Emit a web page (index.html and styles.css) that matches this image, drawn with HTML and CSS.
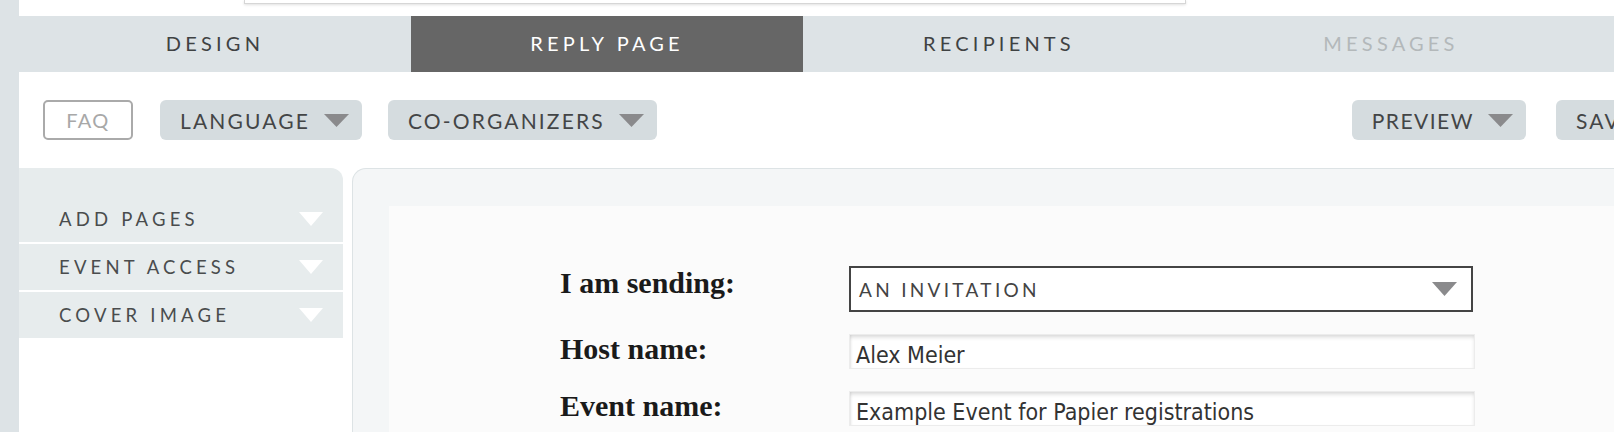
FILE: index.html
```html
<!DOCTYPE html>
<html lang="en">
<head>
<meta charset="utf-8">
<title>Reply Page</title>
<link rel="stylesheet" href="styles.css">
</head>
<body>
<div class="page">
  <div class="strip"></div>
  <div class="main">
    <div class="topbar"><div class="topfield"></div></div>
    <nav class="tabs">
      <div class="tab">DESIGN</div>
      <div class="tab active">REPLY PAGE</div>
      <div class="tab">RECIPIENTS</div>
      <div class="tab disabled">MESSAGES</div>
    </nav>
    <div class="toolbar">
      <div class="tool-group">
        <span class="faq">FAQ</span>
        <span class="btn">LANGUAGE<svg class="caret" viewBox="0 0 25 13"><polygon points="0,0 25,0 12.5,13"/></svg></span>
        <span class="btn">CO-ORGANIZERS<svg class="caret" viewBox="0 0 25 13"><polygon points="0,0 25,0 12.5,13"/></svg></span>
      </div>
      <div class="tool-group tool-right">
        <span class="btn btn-preview">PREVIEW<svg class="caret" viewBox="0 0 25 13"><polygon points="0,0 25,0 12.5,13"/></svg></span>
        <span class="btn btn-save">SAVE</span>
      </div>
    </div>
    <div class="workspace">
      <aside class="sidebar">
        <div class="side-item">ADD PAGES<svg class="side-caret" viewBox="0 0 24 14"><polygon points="0,0 24,0 12,14"/></svg></div>
        <div class="side-item">EVENT ACCESS<svg class="side-caret" viewBox="0 0 24 14"><polygon points="0,0 24,0 12,14"/></svg></div>
        <div class="side-item">COVER IMAGE<svg class="side-caret" viewBox="0 0 24 14"><polygon points="0,0 24,0 12,14"/></svg></div>
      </aside>
      <section class="panel">
        <div class="inner">
          <div class="form">
            <label class="label">I am sending:</label>
            <div class="select"><span>AN INVITATION</span><svg class="caret" viewBox="0 0 25 14"><polygon points="0,0 25,0 12.5,14"/></svg></div>
            <label class="label">Host name:</label>
            <div class="input">Alex Meier</div>
            <label class="label">Event name:</label>
            <div class="input">Example Event for Papier registrations</div>
          </div>
        </div>
      </section>
    </div>
  </div>
</div>
</body>
</html>
```

FILE: styles.css
```css
html, body {
  margin: 0;
  padding: 0;
  background: #ffffff;
  overflow: hidden;
}
body {
  font-family: "Lato", "Liberation Sans", sans-serif;
  color: #444;
}
.page {
  display: flex;
  height: 432px;
  overflow: hidden;
}
.strip {
  width: 19px;
  flex: none;
  background: #dde3e6;
}
.main {
  width: 1662px;
  flex: none;
}
.topbar {
  height: 16px;
}
.topfield {
  margin-left: 225px;
  width: 940px;
  height: 3px;
  background: #fff;
  border: 1px solid #d6d6d6;
  border-top: none;
  box-shadow: 0 1px 3px rgba(0,0,0,0.12);
}
.tabs {
  display: flex;
  height: 56px;
  background: #dde3e6;
}
.tab {
  width: 392px;
  flex: none;
  display: flex;
  align-items: center;
  justify-content: center;
  font-size: 20px;
  letter-spacing: 4.2px;
  color: #3f4243;
  padding-bottom: 3px;
  box-sizing: border-box;
}
.tab.active {
  background: #666666;
  color: #ffffff;
}
.tab.disabled {
  color: #b3b8ba;
}
.toolbar {
  display: flex;
  margin-top: 28px;
  height: 40px;
  padding: 0 25px 0 24px;
}
.tool-group {
  display: flex;
  gap: 26px;
}
.tool-right {
  margin-left: auto;
  gap: 30px;
}
.faq {
  box-sizing: border-box;
  width: 90px;
  height: 40px;
  border: 2px solid #aaaaaa;
  border-radius: 5px;
  display: flex;
  align-items: center;
  justify-content: center;
  font-size: 20px;
  letter-spacing: 1.4px;
  color: #a8a8a8;
  margin-right: 1px;
}
.btn {
  box-sizing: border-box;
  height: 40px;
  display: flex;
  align-items: center;
  gap: 14px;
  padding: 0 13px 0 20px;
  background: #d5dcdf;
  border-radius: 6px;
  font-size: 21px;
  letter-spacing: 2.15px;
  color: #434546;
}
.btn-preview {
  letter-spacing: 1.5px;
}
.btn-save {
  width: 100px;
}
.caret {
  width: 25px;
  height: 13px;
  fill: #8a8a8c;
  flex: none;
}
.workspace {
  display: flex;
  align-items: flex-start;
  gap: 9px;
  margin-top: 28px;
}
.sidebar {
  width: 324px;
  flex: none;
  background: #e7eced;
  border-top-right-radius: 12px;
  padding-top: 28px;
}
.side-item {
  height: 46px;
  display: flex;
  align-items: center;
  justify-content: space-between;
  padding: 0 20px 0 40px;
  font-size: 18.5px;
  letter-spacing: 4.2px;
  color: #4a4c4d;
}
.side-item + .side-item {
  border-top: 2px solid #ffffff;
}
.side-caret {
  width: 24px;
  height: 14px;
  fill: #ffffff;
  flex: none;
}
.panel {
  flex: 1;
  height: 300px;
  background: #f4f6f7;
  border: 1px solid #dde3e5;
  border-right: none;
  border-bottom: none;
  border-top-left-radius: 14px;
  padding: 37px 0 0 36px;
}
.inner {
  background: #fbfbfb;
  height: 300px;
  padding: 60px 0 0 171px;
  box-sizing: border-box;
}
.form {
  display: grid;
  grid-template-columns: 289px 626px;
  row-gap: 20px;
  align-items: start;
}
.label {
  font-family: "Liberation Serif", serif;
  font-weight: bold;
  font-size: 30px;
  color: #1a1a1a;
}
.select {
  box-sizing: border-box;
  width: 624px;
  height: 46px;
  border: 2px solid #444444;
  background: #ffffff;
  display: flex;
  align-items: center;
  justify-content: space-between;
  padding: 0 14px 0 8px;
  font-size: 19px;
  letter-spacing: 3.3px;
  color: #444;
}
.select .caret {
  height: 14px;
}
.input {
  box-sizing: border-box;
  margin-top: 2px;
  width: 626px;
  height: 35px;
  padding: 5px 6px 0;
  line-height: 30px;
  background: #ffffff;
  border: 1px solid #ececec;
  box-shadow: inset 0 3px 4px -1px rgba(0,0,0,0.16), inset 2px 0 3px -2px rgba(0,0,0,0.12);
  font-family: "DejaVu Sans Condensed", "DejaVu Sans", sans-serif;
  font-stretch: condensed;
  font-size: 23px;
  color: #333333;
  white-space: nowrap;
}
```
